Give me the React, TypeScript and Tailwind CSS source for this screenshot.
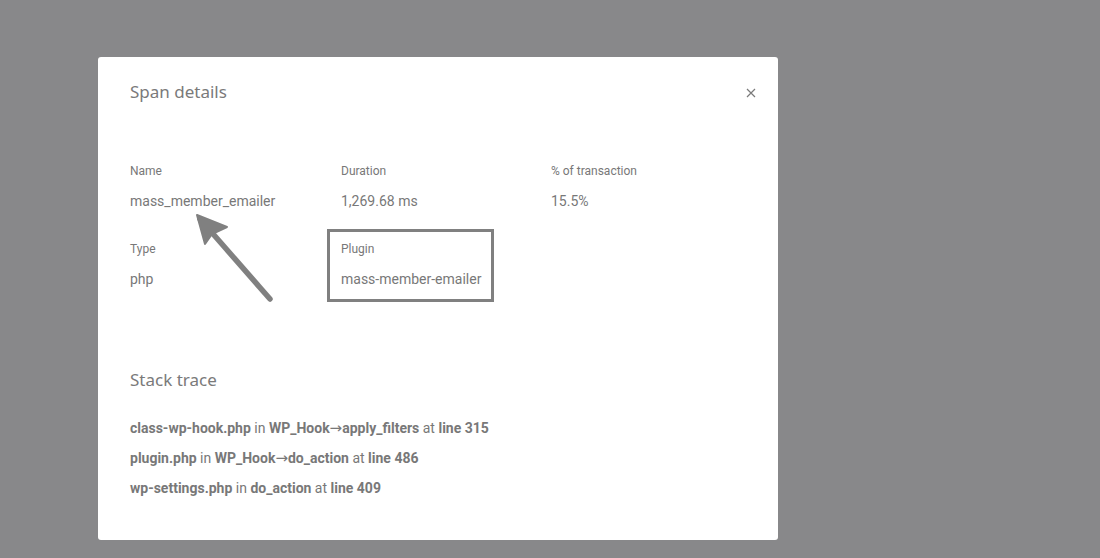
import React from "react";

const Arrow = () => <span style={{ fontFamily: "'DejaVu Sans', sans-serif", fontWeight: 400 }} className="text-[15px] leading-[0]">→</span>;

export default function App() {
  return (
    <div className="w-[1100px] h-[558px] bg-[#88888a] relative overflow-hidden" style={{ fontFamily: "Roboto, 'Liberation Sans', sans-serif" }}>
      <div className="absolute left-[98px] top-[57px] w-[680px] h-[483px] bg-white rounded-[3px] text-[#787878]">
        <div className="flex items-start justify-between pl-[32px] pr-[22px] pt-[23px]">
          <h2 className="text-[17px] leading-[24px] text-[#7a7a7a]" style={{ fontFamily: "'Noto Sans', 'Open Sans', sans-serif" }}>Span details</h2>
          <svg width="10" height="10" viewBox="0 0 10 10" className="mt-[8px]">
            <path d="M1 1 L9 9 M9 1 L1 9" stroke="#7a7a7a" strokeWidth="1.2" />
          </svg>
        </div>
        <div className="pl-[32px] mt-[59px] grid grid-cols-[211px_210px_1fr]">
          <div>
            <div className="text-[12px] leading-[16px]">Name</div>
            <div className="text-[14px] leading-[20px] mt-[12px]">mass_member_emailer</div>
          </div>
          <div>
            <div className="text-[12px] leading-[16px]">Duration</div>
            <div className="text-[14px] leading-[20px] mt-[12px]">1,269.68 ms</div>
          </div>
          <div>
            <div className="text-[12px] leading-[16px]">% of transaction</div>
            <div className="text-[14px] leading-[20px] mt-[12px]">15.5%</div>
          </div>
          <div className="mt-[30px]">
            <div className="text-[12px] leading-[16px]">Type</div>
            <div className="text-[14px] leading-[20px] mt-[12px]">php</div>
          </div>
          <div className="mt-[30px] relative">
            <div className="absolute left-[-14px] top-[-12px] w-[167px] h-[73px] border-[3px] border-[#808080]" />
            <div className="text-[12px] leading-[16px]">Plugin</div>
            <div className="text-[14px] leading-[20px] mt-[12px]">mass-member-emailer</div>
          </div>
          <div />
        </div>
        <div className="pl-[32px] mt-[79px]">
          <h3 className="text-[17px] leading-[24px] text-[#7a7a7a]" style={{ fontFamily: "'Noto Sans', 'Open Sans', sans-serif" }}>Stack trace</h3>
          <div className="mt-[26px] flex flex-col gap-[10px] text-[14px] leading-[20px]">
            <div><b className="font-bold">class-wp-hook.php</b> in <b className="font-bold">WP_Hook<Arrow />apply_filters</b> at <b className="font-bold">line 315</b></div>
            <div><b className="font-bold">plugin.php</b> in <b className="font-bold">WP_Hook<Arrow />do_action</b> at <b className="font-bold">line 486</b></div>
            <div><b className="font-bold">wp-settings.php</b> in <b className="font-bold">do_action</b> at <b className="font-bold">line 409</b></div>
          </div>
        </div>
      </div>
      <svg className="absolute left-0 top-0 pointer-events-none" width="1100" height="558">
        <path d="M270 299 L200 219" stroke="#808080" strokeWidth="5.5" strokeLinecap="round" fill="none" />
        <path d="M197 215 L227 227 L212 234 L205 244 Z" fill="#808080" stroke="#808080" strokeWidth="2" strokeLinejoin="round" />
      </svg>
    </div>
  );
}
